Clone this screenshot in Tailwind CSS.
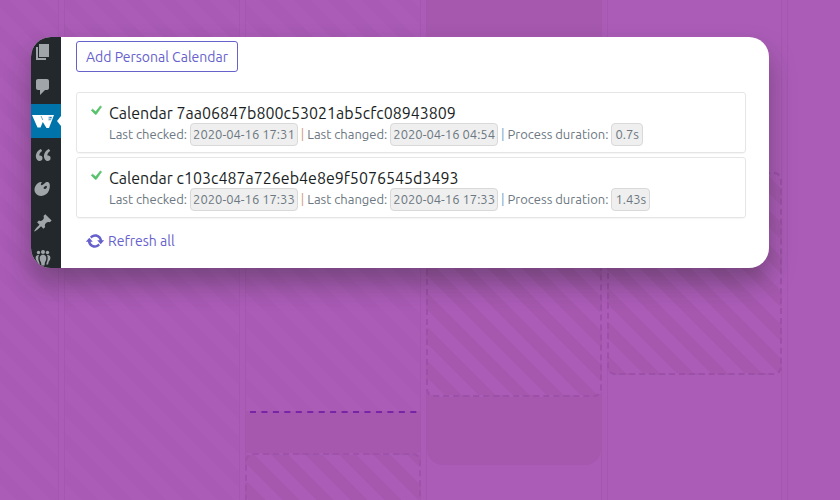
<!DOCTYPE html>
<html lang="en">
<head>
    <meta charset="UTF-8">
    <meta name="viewport" content="width=device-width, initial-scale=1.0">
    <script src="https://cdn.jsdelivr.net/npm/@tailwindcss/browser@4"></script>
    <title>Calendars</title>
</head>
<body class="bg-[#ab5cb7] font-['Ubuntu','Noto_Sans',sans-serif]">

<main class="relative min-h-screen overflow-hidden">

    <!-- week view in the background -->
    <div class="absolute inset-0 flex gap-[5px] overflow-hidden" aria-hidden="true">
        <div class="w-[59px] shrink-0 border-r border-[#a557b0] bg-[repeating-linear-gradient(45deg,#ab5cb7_0px,#ab5cb7_12px,#a85ab4_12px,#a85ab4_24px)]"></div>
        <div class="w-44 shrink-0 border-x border-[#a557b0] bg-[repeating-linear-gradient(45deg,#ab5cb7_0px,#ab5cb7_12px,#a85ab4_12px,#a85ab4_24px)]"></div>
        <div class="w-44 shrink-0 border-x border-[#a557b0] flex flex-col">
            <div class="h-[411px] shrink-0 bg-[repeating-linear-gradient(45deg,#ab5cb7_0px,#ab5cb7_12px,#a85ab4_12px,#a85ab4_24px)]"></div>
            <svg class="h-[2px] w-full shrink-0 bg-[#a558ae]"><line x1="4" y1="1" x2="171" y2="1" stroke="#7724a6" stroke-width="2" stroke-dasharray="6 5.45"/></svg>
            <div class="h-10 shrink-0 bg-[#a558ae]"></div>
            <div class="-mx-px h-[200px] shrink-0 rounded-lg border-2 border-dashed border-[#9f52aa] bg-[repeating-linear-gradient(45deg,#ab5cb7_0px,#ab5cb7_12px,#a558ae_12px,#a558ae_24px)]"></div>
        </div>
        <div class="w-44 shrink-0 border-x border-[#a557b0]">
            <div class="h-[465px] rounded-b-2xl bg-[#a558ae]">
                <div class="h-[197px]"></div>
                <div class="-mx-px h-[200px] rounded-lg border-2 border-dashed border-[#9c50a7] bg-[repeating-linear-gradient(45deg,#ab5cb7_0px,#ab5cb7_12px,#a558ae_12px,#a558ae_24px)]"></div>
            </div>
        </div>
        <div class="w-[175px] shrink-0 border-x border-[#a557b0] pt-[172px]">
            <div class="-mx-px h-[203px] rounded-lg border-2 border-dashed border-[#9c50a7] bg-[repeating-linear-gradient(45deg,#a558ae_0px,#a558ae_12px,#ab5cb7_12px,#ab5cb7_24px)]"></div>
        </div>
        <div class="grow border-l border-[#a557b0]"></div>
    </div>

    <div class="relative mt-[37px] ml-[31px] mr-[71px] flex overflow-hidden rounded-[20px] bg-white shadow-[0px_15px_26px_0px_rgba(30,30,30,0.36)]">

        <nav class="w-[30px] shrink-0 bg-[#23282d] text-[#a0a5aa]">
            <a href="#" aria-label="Pages" class="flex h-[33px] items-start pt-[5px] pl-[2px]">
                <svg class="size-5" viewBox="0 0 20 20" fill="currentColor"><path d="M6 15V2h10v13H6zm-1 1h8v2H3V5h2v11z"/></svg>
            </a>
            <a href="#" aria-label="Comments" class="flex h-[34px] items-center pl-[2px]">
                <svg class="size-5" viewBox="0 0 20 20" fill="currentColor"><path d="M5 2h9c1.100 0 2 .9 2 2v7c0 1.100-.9 2-2 2h-2l-5 5v-5H5c-1.100 0-2-.9-2-2V4c0-1.100.9-2 2-2z"/></svg>
            </a>
            <a href="#" aria-label="Calendars" class="flex h-[34px] items-center justify-between bg-[#0073aa] text-white">
                <svg class="h-5 w-6" viewBox="0 0 24 20" fill="currentColor">
                    <path d="M1 4H23L18 17H15.500L11.800 11L9.500 16.500H6.500Z"/>
                    <path d="M10 5L11.800 9" stroke="#0073aa" stroke-width=".6"/>
                    <path d="M17.500 5.500H21.500L20 9.500H17.200Z" fill="#a9cce0"/>
                    <path d="M18.500 6.500H20.500M18.500 8.500H19.500" stroke="#2f83b2" stroke-width="1"/>
                </svg>
                <svg class="h-3 w-1" viewBox="0 0 4 12" fill="currentColor"><path d="M4 1V11L0 6Z"/></svg>
            </a>
            <a href="#" aria-label="Quotes" class="flex h-[34px] items-center pl-[2px]">
                <svg class="size-5" viewBox="0 0 20 20" fill="currentColor"><path d="M9.490 13.220c0-.74-.2-1.380-.61-1.900-.62-.78-1.830-.88-2.530-.72-.29-1.650 1.110-3.750 2.920-4.650L7.880 4c-2.730 1.300-5.420 4.280-4.960 8.050C3.210 14.430 4.590 16 6.540 16c.85 0 1.560-.25 2.120-.75s.83-1.180.83-2.030zm8.050 0c0-.74-.2-1.380-.61-1.900-.63-.78-1.830-.88-2.530-.72-.29-1.650 1.110-3.750 2.920-4.650L15.930 4c-2.730 1.300-5.410 4.280-4.950 8.050.29 2.380 1.660 3.950 3.610 3.950.85 0 1.560-.25 2.120-.75s.83-1.180.83-2.030z"/></svg>
            </a>
            <a href="#" aria-label="Art" class="flex h-[34px] items-center pl-[2px]">
                <svg class="size-5" viewBox="0 0 20 20" fill="currentColor"><path fill-rule="evenodd" d="M8.550 3.060c1.010.34-1.950 2.010-.1 3.130 1.040.63 3.310-2.220 4.450-2.860.97-.54 2.670-.65 3.530 1.230 1.090 2.380.14 8.570-3.790 11.060-3.970 2.500-8.970 1.230-10.700-2.660-2.010-4.530 3.120-11.090 6.610-9.900zM10.800 9.600c.9.700 2.200.3 2.800-.7.500-.9.400-1.900-.3-2.200-.8-.3-1.400.7-1.900 1.100-.5.400-1.300 1.200-.6 1.800z"/></svg>
            </a>
            <a href="#" aria-label="Posts" class="flex h-[34px] items-center pl-[2px]">
                <svg class="size-5" viewBox="0 0 20 20" fill="currentColor"><path d="M10.440 3.020l1.820-1.820 6.360 6.350-1.830 1.820c-1.050-.68-2.480-.57-3.410.36l-.75.75c-.92.93-1.040 2.350-.35 3.410l-1.830 1.820-2.410-2.410-2.800 2.790c-.42.42-3.380 2.710-3.800 2.290s1.860-3.390 2.280-3.810l2.790-2.790L4.100 9.360l1.830-1.820c1.050.69 2.480.57 3.400-.36l.75-.75c.93-.92 1.050-2.350.36-3.410z"/></svg>
            </a>
            <a href="#" aria-label="Groups" class="flex h-7 items-end pl-[2px]">
                <svg class="size-5" viewBox="0 0 20 20" fill="currentColor">
                    <circle cx="10" cy="4" r="2"/><circle cx="5.500" cy="4.500" r="1.700"/><circle cx="14.500" cy="4.500" r="1.700"/>
                    <path d="M10 6.700c2 0 3.300 1.300 3.300 3.400 0 2-.7 3.200-1.300 4.200l-.5 3.200h-3L8 14.300c-.6-1-1.300-2.200-1.300-4.200 0-2.100 1.300-3.400 3.300-3.400z"/>
                    <path d="M6 7.200C5 8.500 5 11.500 6.200 14.200l.6 2.300H4.900L4.300 13.800C3.200 12.600 2.600 11.200 2.600 9.800 2.700 7.900 4.200 6.700 6 7.200zM14 7.200c1 1.300 1 4.300-.2 7l-.6 2.300h1.900l.6-2.700c1.100-1.200 1.700-2.600 1.700-4-.1-1.900-1.600-3.100-3.400-2.600z"/>
                </svg>
            </a>
        </nav>

        <section class="min-w-0 grow pt-1 pr-[23px] pb-3 pl-[15px]">
            <button type="button" class="h-[31px] w-[162px] rounded-[3px] border border-[#6661cc] text-sm whitespace-nowrap text-[#6661cc]">Add Personal Calendar</button>

            <ul class="mt-5 flex flex-col gap-1">
                <li class="flex h-[61px] gap-1 rounded-[3px] border border-[#e5e5e5] pt-[9px] pl-[10px] shadow-[0px_1px_1px_rgba(0,0,0,0.04)]">
                    <svg class="size-[18px] shrink-0 text-[#55c26a]" viewBox="0 0 20 20" fill="currentColor" stroke="currentColor" stroke-width=".8"><path d="M14.830 4.390l1.340.94-5.810 8.380H9.020L4.780 9.170l1.340-1.250 3.570 2.900z"/></svg>
                    <div class="whitespace-nowrap">
                        <h2 class="h-[22px] text-base leading-[22px] text-[#191e23]">Calendar 7aa06847b800c53021ab5cfc08943809</h2>
                        <p class="flex h-[21px] items-center gap-[3px] text-[13px] text-[#6c7781]">
                            <span>Last checked:</span>
                            <code class="h-[23px] rounded-[4px] border border-[#d9d9d9] bg-[#efefef] px-[2px] font-['Ubuntu','Noto_Sans',sans-serif] leading-[21px]">2020-04-16 17:31</code>
                            <span class="text-[#cf9d78]">|</span>
                            <span>Last changed:</span>
                            <code class="h-[23px] rounded-[4px] border border-[#d9d9d9] bg-[#efefef] px-[2px] font-['Ubuntu','Noto_Sans',sans-serif] leading-[21px]">2020-04-16 04:54</code>
                            <span class="text-[#6f9fc8]">|</span>
                            <span>Process duration:</span>
                            <code class="h-[23px] rounded-[4px] border border-[#d9d9d9] bg-[#efefef] px-[3px] font-['Ubuntu','Noto_Sans',sans-serif] leading-[21px]">0.7s</code>
                        </p>
                    </div>
                </li>
                <li class="flex h-[61px] gap-1 rounded-[3px] border border-[#e5e5e5] pt-[9px] pl-[10px] shadow-[0px_1px_1px_rgba(0,0,0,0.04)]">
                    <svg class="size-[18px] shrink-0 text-[#55c26a]" viewBox="0 0 20 20" fill="currentColor" stroke="currentColor" stroke-width=".8"><path d="M14.830 4.390l1.340.94-5.810 8.380H9.020L4.780 9.170l1.340-1.250 3.570 2.900z"/></svg>
                    <div class="whitespace-nowrap">
                        <h2 class="h-[22px] text-base leading-[22px] text-[#191e23]">Calendar c103c487a726eb4e8e9f5076545d3493</h2>
                        <p class="flex h-[21px] items-center gap-[3px] text-[13px] text-[#6c7781]">
                            <span>Last checked:</span>
                            <code class="h-[23px] rounded-[4px] border border-[#d9d9d9] bg-[#efefef] px-[2px] font-['Ubuntu','Noto_Sans',sans-serif] leading-[21px]">2020-04-16 17:33</code>
                            <span class="text-[#cf9d78]">|</span>
                            <span>Last changed:</span>
                            <code class="h-[23px] rounded-[4px] border border-[#d9d9d9] bg-[#efefef] px-[2px] font-['Ubuntu','Noto_Sans',sans-serif] leading-[21px]">2020-04-16 17:33</code>
                            <span class="text-[#6f9fc8]">|</span>
                            <span>Process duration:</span>
                            <code class="h-[23px] rounded-[4px] border border-[#d9d9d9] bg-[#efefef] px-[3px] font-['Ubuntu','Noto_Sans',sans-serif] leading-[21px]">1.43s</code>
                        </p>
                    </div>
                </li>
            </ul>

            <button type="button" class="mt-3 ml-[9px] flex h-[22px] items-center gap-[3px] text-sm text-[#6661cc]">
                <svg class="size-5" viewBox="0 0 20 20" fill="currentColor"><path d="M10.200 3.280c3.530 0 6.430 2.610 6.920 6h2.080l-3.500 4-3.500-4h2.320c-.45-1.970-2.210-3.450-4.320-3.450-1.450 0-2.730.71-3.540 1.780L4.950 5.660C6.230 4.200 8.110 3.280 10.200 3.280zm-.4 13.440c-3.520 0-6.430-2.610-6.920-6H.8l3.500-4c1.170 1.330 2.330 2.670 3.500 4H5.480c.45 1.970 2.210 3.450 4.320 3.450 1.450 0 2.730-.71 3.540-1.780l1.710 1.950c-1.280 1.460-3.150 2.380-5.250 2.380z"/></svg>
                Refresh all
            </button>
        </section>
    </div>
</main>

</body>
</html>
